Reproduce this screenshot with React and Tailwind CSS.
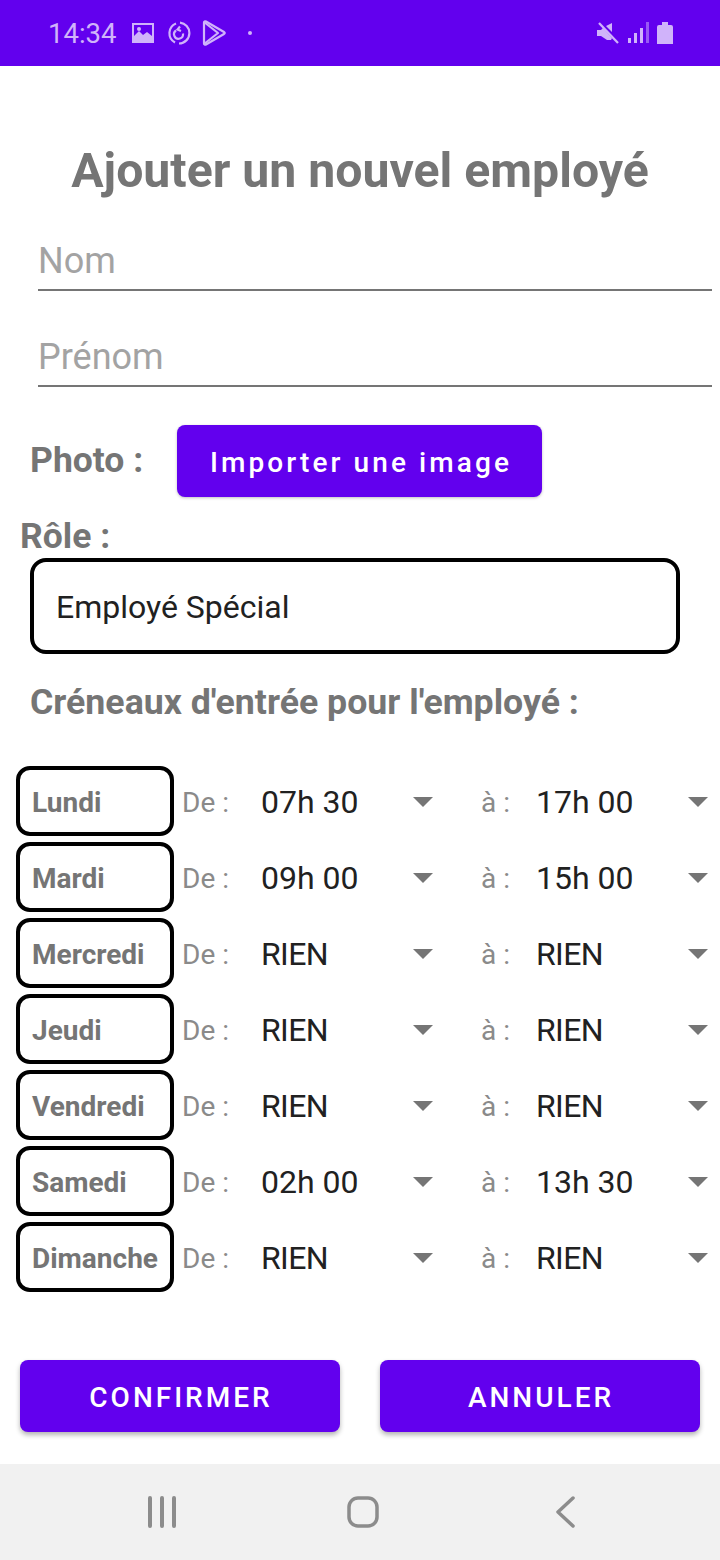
const days = [
  { name: 'Lundi', from: '07h 30', to: '17h 00' },
  { name: 'Mardi', from: '09h 00', to: '15h 00' },
  { name: 'Mercredi', from: 'RIEN', to: 'RIEN' },
  { name: 'Jeudi', from: 'RIEN', to: 'RIEN' },
  { name: 'Vendredi', from: 'RIEN', to: 'RIEN' },
  { name: 'Samedi', from: '02h 00', to: '13h 30' },
  { name: 'Dimanche', from: 'RIEN', to: 'RIEN' },
];

function StatusBar() {
  return (
    <div className="h-[66px] bg-[#6200ee] flex items-center pl-[48px] text-[#d0b3fa]">
      <span className="text-[27.500px] leading-none pt-[2px]">14:34</span>
      <svg className="ml-[16px]" width="22" height="21" viewBox="0 0 22 21" fill="currentColor">
        <path fillRule="evenodd" d="M0 0h22v20H0zM2 2v11l5-5 4 4 4-3 5 4V2z" />
        <circle cx="7" cy="6" r="2" />
      </svg>
      <svg className="ml-[13px]" width="24" height="24" viewBox="0 0 24 24" fill="none" stroke="currentColor" strokeWidth="2.200">
        <path d="M8 21.500A10.500 10.500 0 0 1 9 2.500" />
        <path d="M13 1.600A10.500 10.500 0 0 1 22.400 12 10.500 10.500 0 0 1 12 22.500" />
        <path d="M9 9.500a4.500 4.500 0 1 0 7 3" />
        <path d="M13 5.500l-2.500 3 3.500 1.500" />
      </svg>
      <svg className="ml-[11px]" width="24" height="26" viewBox="0 0 24 26" fill="none" stroke="currentColor" strokeWidth="2.200" strokeLinejoin="round">
        <path d="M2 2.500c0-1 1-1.500 2-1l18 10.500c1 .6 1 1.500 0 2L4 24.500c-1 .5-2 0-2-1z" />
        <path d="M2 2l14 11L2 24" />
      </svg>
      <span className="ml-[22px] w-[4px] h-[4px] rounded-full bg-[#d0b3fa]" />
      <div className="ml-auto mr-[47px] flex items-center">
        <svg width="22" height="22" viewBox="0 0 22 22" fill="currentColor">
          <path d="M0 8h4l2-2 9 10-1 2-4 0-6-4H0zM9 4l6-3v9z" />
          <path d="M2 1l19 20" stroke="currentColor" strokeWidth="2.200" />
        </svg>
        <svg className="ml-[9px]" width="21" height="22" viewBox="0 0 21 22">
          <rect x="0" y="16" width="3" height="5" fill="currentColor" />
          <rect x="6" y="11" width="3" height="10" fill="currentColor" />
          <rect x="12" y="6" width="3" height="15" fill="currentColor" />
          <rect x="18" y="0" width="3" height="21" fill="currentColor" opacity="0.5" />
        </svg>
        <svg className="ml-[8px]" width="16" height="22" viewBox="0 0 16 22" fill="currentColor">
          <path d="M0 5a2 2 0 0 1 2-2h3V0h6v3h3a2 2 0 0 1 2 2v17H0z" />
        </svg>
      </div>
    </div>
  );
}

function TextField({ hint }) {
  return (
    <div className="ml-[38px] border-b-2 border-[#757575] h-[58px] flex items-center text-[36px] text-[#a3a3a3] leading-none">
      {hint}
    </div>
  );
}

function Arrow() {
  return (
    <svg className="mt-[2px]" width="20" height="10" viewBox="0 0 20 10" fill="#757575">
      <path d="M0 0h20L10 10z" />
    </svg>
  );
}

function TimeSelect({ label, value, width }) {
  return (
    <div className={`flex items-center ${width}`}>
      <span className={`text-[28px] text-[#8a8a8a] pt-[4px] shrink-0 ${label === 'De :' ? 'w-[79px]' : 'w-[55px]'}`}>{label}</span>
      <span className={`text-[32px] text-[#212121] pt-[2px] w-[152px] shrink-0 ${value === 'RIEN' ? 'tracking-[-0.6px]' : ''}`}>{value}</span>
      <Arrow />
    </div>
  );
}

function DayRow({ day }) {
  return (
    <div className="flex items-center h-[76px]">
      <div className="ml-[16px] w-[158px] h-[70px] border-4 border-black rounded-[14px] flex items-center pl-[12px] pt-[4px] text-[28px] font-bold text-[#757575] shrink-0 whitespace-nowrap">
        {day.name}
      </div>
      <div className="ml-[8px]">
        <TimeSelect label="De :" value={day.from} width="w-[299px]" />
      </div>
      <TimeSelect label="à :" value={day.to} width="w-[227px]" />
    </div>
  );
}

function PrimaryButton({ children }) {
  return (
    <button className="w-[320px] h-[72px] bg-[#6200ee] rounded-[8px] text-white text-[28px] font-medium tracking-[3px] pl-[2px] pt-[4px] shadow-[0_3px_5px_rgba(0,0,0,0.3)]">
      {children}
    </button>
  );
}

export default function App() {
  return (
    <div className="w-[720px] h-[1560px] bg-white flex flex-col overflow-hidden font-['Roboto',sans-serif]">
      <StatusBar />

      <div className="flex-1 flex flex-col">
        <h1 className="mt-[77px] text-center text-[48.200px] leading-[56px] font-bold text-[#757575]">
          Ajouter un nouvel employé
        </h1>

        <div className="mt-[34px] flex flex-col gap-[38px] mr-[8px]">
          <TextField hint="Nom" />
          <TextField hint="Prénom" />
        </div>

        <div className="mt-[38px] flex items-center">
          <span className="ml-[30px] w-[116px] shrink-0 text-[35.500px] font-bold text-[#757575] leading-none">Photo :</span>
          <button className="ml-[31px] w-[365px] h-[72px] bg-[#6200ee] rounded-[8px] text-white text-[28px] font-medium tracking-[3.100px] pl-[3px] pt-[3px] shadow-[0_1px_3px_rgba(0,0,0,0.25)]">
            Importer une image
          </button>
        </div>

        <div className="mt-[18px] ml-[20px] text-[35.500px] leading-[42px] font-bold text-[#757575]">Rôle :</div>

        <div className="mt-[1px] ml-[30px] w-[650px] h-[96px] border-4 border-black rounded-[16px] flex items-center pl-[22px] pt-[2px] text-[32px] text-[#212121]">
          Employé Spécial
        </div>

        <div className="mt-[28px] ml-[30px] text-[35.700px] leading-[40px] font-bold text-[#757575]">
          Créneaux d'entrée pour l'employé :
        </div>

        <div className="mt-[41px] flex flex-col">
          {days.map((day) => (
            <DayRow key={day.name} day={day} />
          ))}
        </div>

        <div className="mt-[65px] mx-[20px] flex justify-between">
          <PrimaryButton>CONFIRMER</PrimaryButton>
          <PrimaryButton>ANNULER</PrimaryButton>
        </div>
      </div>

      <div className="h-[96px] bg-[#f1f1f1] shrink-0 flex items-center">
        <svg className="ml-[147px]" width="30" height="32" viewBox="0 0 30 32" fill="none" stroke="#8c8c8c" strokeWidth="4" strokeLinecap="round">
          <path d="M3 2v28M15 2v28M27 2v28" />
        </svg>
        <svg className="ml-[170px]" width="32" height="32" viewBox="0 0 32 32" fill="none" stroke="#8c8c8c" strokeWidth="3.500">
          <rect x="2" y="2" width="28" height="28" rx="9" />
        </svg>
        <svg className="ml-[176px]" width="20" height="32" viewBox="0 0 20 32" fill="none" stroke="#8c8c8c" strokeWidth="3.500" strokeLinecap="round" strokeLinejoin="round">
          <path d="M18 2L3 16l15 14" />
        </svg>
      </div>
    </div>
  );
}
